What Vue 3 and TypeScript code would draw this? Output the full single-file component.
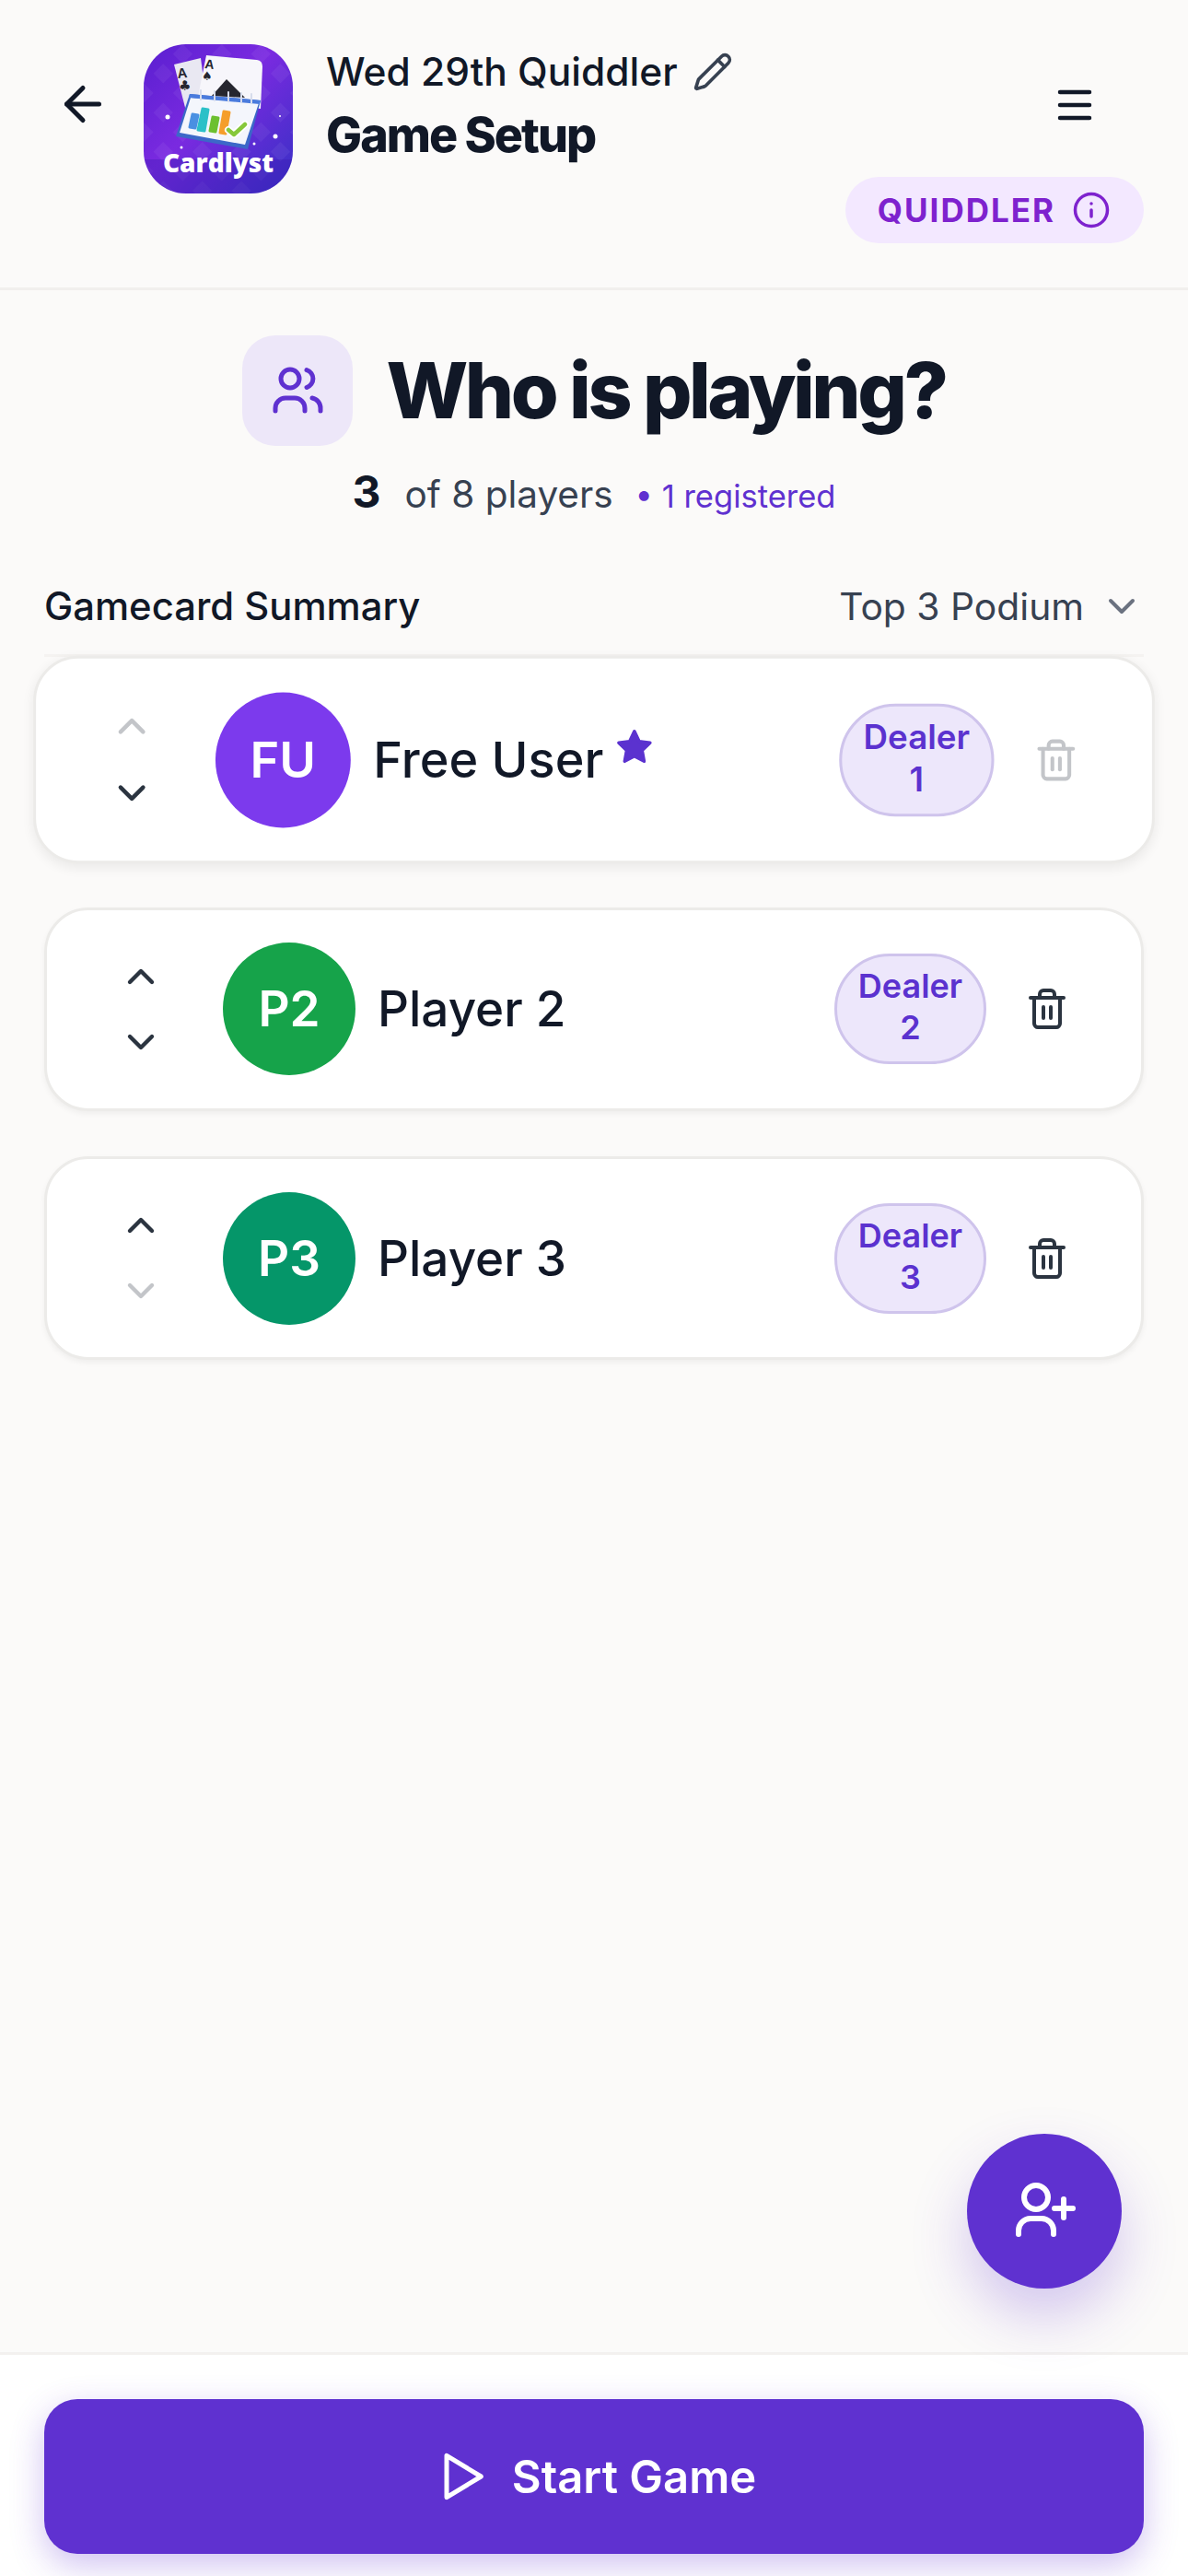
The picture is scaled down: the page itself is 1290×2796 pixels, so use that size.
<script setup lang="ts">
interface Player {
  id: number
  name: string
  initials: string
  color: string
  dealer: number
  registered: boolean
}

const players: Player[] = [
  { id: 1, name: 'Free User', initials: 'FU', color: '#7c3aed', dealer: 1, registered: true },
  { id: 2, name: 'Player 2', initials: 'P2', color: '#16a34a', dealer: 2, registered: false },
  { id: 3, name: 'Player 3', initials: 'P3', color: '#059669', dealer: 3, registered: false },
]
</script>

<template>
  <div class="page">
    <header class="header">
      <button class="icon-btn back">
        <svg viewBox="0 0 24 24" width="60" height="60" fill="none" stroke="#111827" stroke-width="2" stroke-linecap="round" stroke-linejoin="round">
          <path d="m12 19-7-7 7-7" />
          <path d="M19 12H5" />
        </svg>
      </button>

      <svg class="logo" viewBox="0 0 162 162" width="162" height="162">
        <defs>
          <linearGradient id="logoBg" x1="0" y1="0" x2="1" y2="1">
            <stop offset="0" stop-color="#5a1fd0" />
            <stop offset="0.45" stop-color="#7a2ae0" />
            <stop offset="1" stop-color="#3530c4" />
          </linearGradient>
          <pattern id="logoDiamonds" width="30" height="30" patternUnits="userSpaceOnUse" patternTransform="rotate(45)">
            <rect width="15" height="15" fill="#ffffff" opacity="0.05" />
          </pattern>
          <clipPath id="logoClip">
            <rect width="162" height="162" rx="46" />
          </clipPath>
        </defs>
        <g clip-path="url(#logoClip)">
          <rect width="162" height="162" fill="url(#logoBg)" />
          <rect width="162" height="162" fill="url(#logoDiamonds)" />
          <path d="M0 125h162v37H0z" fill="#3a1bb0" opacity="0.35" />
        </g>
        <circle cx="26" cy="79" r="2.5" fill="#fff" />
        <circle cx="143" cy="100" r="2.5" fill="#fff" />
        <circle cx="41" cy="112" r="1.5" fill="#fff" />
        <circle cx="120" cy="108" r="1.5" fill="#fff" />
        <circle cx="148" cy="78" r="1" fill="#fff" />
        <path d="M33 22 62 15 70 78 50 88Z" fill="#e9e8f2" />
        <path d="M68 12 123 17Q129 18 129 24L127 70 58 62Z" fill="#f7f6fb" />
        <text x="37" y="37" class="logo-card-text" font-size="15" transform="rotate(-6 37 37)">A</text>
        <text x="38" y="50" class="logo-suit" font-size="15">♣</text>
        <text x="66" y="26" class="logo-card-text" font-size="14" transform="rotate(6 66 26)">A</text>
        <text x="63" y="39" class="logo-suit" font-size="13">♠</text>
        <path d="M90 38 110 58 74 56Z" fill="#26262f" />
        <path d="M50 54 127 61 113 114 35 100Z" fill="#3c68c8" />
        <path d="M51 58 125 64 110 109 39 96Z" fill="#f4f6fc" />
        <path d="M50 54 127 61 126 65 49 58Z" fill="#4a7bdd" />
        <g fill="none" stroke="#d7dcec" stroke-width="2" stroke-linecap="round">
          <path d="M62 50v10M77 51v10M92 52v10M106 53v10M117 54v10" />
        </g>
        <path d="M53 76l6 1-3 14-6-1Z" fill="#4a90e2" stroke="#4a90e2" stroke-width="3" stroke-linejoin="round" />
        <path d="M64 70l6 1-4 23-7-1Z" fill="#2cc0c8" stroke="#2cc0c8" stroke-width="3" stroke-linejoin="round" />
        <path d="M75 79l6 1-3 15-6-1Z" fill="#6cc030" stroke="#6cc030" stroke-width="3" stroke-linejoin="round" />
        <path d="M87 73l6 1-4 23-6-1Z" fill="#f59e2b" stroke="#f59e2b" stroke-width="3" stroke-linejoin="round" />
        <path d="M92 93 98 98 110 87" fill="none" stroke="#fff" stroke-width="8" stroke-linecap="round" stroke-linejoin="round" />
        <path d="M92 93 98 98 110 87" fill="none" stroke="#86c83a" stroke-width="4.5" stroke-linecap="round" stroke-linejoin="round" />
        <text x="81" y="139" text-anchor="middle" class="logo-name">Cardlyst</text>
      </svg>

      <div class="titles">
        <div class="game-name">
          <span>Wed 29th Quiddler</span>
          <svg viewBox="0 0 24 24" width="44" height="44" fill="none" stroke="#374151" stroke-width="2" stroke-linecap="round" stroke-linejoin="round">
            <path d="M21.174 6.812a1 1 0 0 0-3.986-3.987L3.842 16.174a2 2 0 0 0-.5.83l-1.321 4.352a.5.5 0 0 0 .623.622l4.353-1.32a2 2 0 0 0 .83-.497z" />
            <path d="m15 5 4 4" />
          </svg>
        </div>
        <h1 class="page-title">Game Setup</h1>
      </div>

      <div class="header-right">
        <button class="icon-btn menu">
          <svg viewBox="0 0 72 72" width="72" height="72" fill="none" stroke="#111827" stroke-width="4.500" stroke-linecap="round">
            <path d="M20 22h32M20 36h32M20 50h32" />
          </svg>
        </button>
        <div class="game-badge">
          <span>QUIDDLER</span>
          <svg viewBox="0 0 24 24" width="42" height="42" fill="none" stroke="#7e22ce" stroke-width="2" stroke-linecap="round" stroke-linejoin="round">
            <circle cx="12" cy="12" r="10" />
            <path d="M12 16v-4" />
            <path d="M12 8h.01" />
          </svg>
        </div>
      </div>
    </header>

    <main class="content">
      <div class="hero">
        <div class="hero-icon">
          <svg viewBox="0 0 72 72" width="72" height="72" fill="none" stroke="#5f31d0" stroke-width="5" stroke-linecap="round" stroke-linejoin="round">
            <circle cx="28" cy="23" r="10" />
            <path d="M12 58v-3a11 11 0 0 1 11-11h10a11 11 0 0 1 11 11v3" />
            <path d="M46 13.500a10 10 0 0 1 0 19" />
            <path d="M52 44a11 11 0 0 1 9 11v3" />
          </svg>
        </div>
        <h2 class="hero-title">Who is playing?</h2>
      </div>

      <div class="counts">
        <strong class="count-num">3</strong>
        <span class="count-label">of 8 players</span>
        <span class="count-reg">• 1 registered</span>
      </div>

      <div class="summary">
        <span class="summary-label">Gamecard Summary</span>
        <div class="summary-select">
          <span>Top 3 Podium</span>
          <svg viewBox="0 0 24 24" width="48" height="48" fill="none" stroke="#6b7280" stroke-width="2" stroke-linecap="round" stroke-linejoin="round">
            <path d="m6 9 6 6 6-6" />
          </svg>
        </div>
      </div>

      <div class="player-list">
        <div
          v-for="(p, i) in players"
          :key="p.id"
          class="player-card"
          :class="{ lifted: i === 0 }"
        >
          <div class="arrows">
            <svg :class="{ off: i === 0 }" viewBox="0 0 24 24" width="48" height="48" fill="none" stroke="#2b3440" stroke-width="2.200" stroke-linecap="round" stroke-linejoin="round">
              <path d="m6 15 6-6 6 6" />
            </svg>
            <svg :class="{ off: i === players.length - 1 }" viewBox="0 0 24 24" width="48" height="48" fill="none" stroke="#2b3440" stroke-width="2.200" stroke-linecap="round" stroke-linejoin="round">
              <path d="m6 9 6 6 6-6" />
            </svg>
          </div>
          <div class="avatar" :style="{ background: p.color }">{{ p.initials }}</div>
          <div class="player-name">
            <span>{{ p.name }}</span>
            <svg v-if="p.registered" class="star" viewBox="0 0 24 24" width="42" height="42" fill="#5b32cf" stroke="#5b32cf" stroke-width="2" stroke-linejoin="round">
              <path d="M12 2.500l2.900 6.100 6.600.9-4.800 4.600 1.200 6.600L12 17.600l-5.900 3.100 1.200-6.600L2.500 9.500l6.600-.9z" />
            </svg>
          </div>
          <div class="dealer">Dealer<br />{{ p.dealer }}</div>
          <button class="icon-btn trash" :class="{ off: i === 0 }">
            <svg viewBox="0 0 24 24" width="48" height="48" fill="none" stroke="#2b3440" stroke-width="2" stroke-linecap="round" stroke-linejoin="round">
              <path d="M3 6h18" />
              <path d="M19 6v14c0 1-1 2-2 2H7c-1 0-2-1-2-2V6" />
              <path d="M8 6V4c0-1 1-2 2-2h4c1 0 2 1 2 2v2" />
              <path d="M10 11v6" />
              <path d="M14 11v6" />
            </svg>
          </button>
        </div>
      </div>
    </main>

    <button class="fab">
      <svg viewBox="0 0 84 84" width="84" height="84" fill="none" stroke="#fff" stroke-width="6" stroke-linecap="round" stroke-linejoin="round">
        <circle cx="33" cy="27" r="13" />
        <path d="M14 67v-4a13 13 0 0 1 13-13h12a13 13 0 0 1 13 13v4" />
        <path d="M63 29v20M53 39h20" />
      </svg>
    </button>

    <footer class="footer">
      <button class="start-btn">
        <svg viewBox="0 0 24 24" width="64" height="64" fill="none" stroke="#fff" stroke-width="1.870" stroke-linecap="round" stroke-linejoin="round">
          <path d="M6 3.500v17l14-8.500z" />
        </svg>
        <span>Start Game</span>
      </button>
    </footer>
  </div>
</template>

<style>
body {
  background-color: #fbfaf9;
}
</style>

<style scoped>
* {
  box-sizing: border-box;
  margin: 0;
  padding: 0;
}

.page {
  position: relative;
  display: flex;
  flex-direction: column;
  min-height: 100vh;
  background-color: #fbfaf9;
  color: #111827;
  font-family: Inter, 'Noto Sans', sans-serif;
}

.icon-btn {
  display: flex;
  align-items: center;
  justify-content: center;
  background: none;
  border: none;
}

/* 页面头部 */
.header {
  display: flex;
  align-items: flex-start;
  height: 315px;
  padding: 48px 48px 0 60px;
  border-bottom: 3px solid #f1efed;
}

.back {
  margin-top: 35px;
  margin-right: 36px;
}

.logo {
  flex-shrink: 0;
  margin-right: 36px;
}

.logo-card-text {
  font-family: 'Liberation Sans', sans-serif;
  font-weight: 700;
  fill: #26262f;
}

.logo-suit {
  font-family: 'DejaVu Sans', sans-serif;
  fill: #26262f;
}

.logo-name {
  font-family: 'Open Sans', sans-serif;
  font-size: 28px;
  font-weight: 800;
  fill: #fff;
}

.titles {
  flex: 1;
}

.game-name {
  display: flex;
  align-items: center;
  gap: 16px;
  height: 60px;
  font-size: 42.5px;
  font-weight: 500;
  line-height: 60px;
}

.page-title {
  margin-top: 6px;
  font-size: 52px;
  font-weight: 800;
  line-height: 66px;
  letter-spacing: -2px;
}

.header-right {
  display: flex;
  flex-direction: column;
  align-items: flex-end;
  padding-top: 30px;
}

.menu {
  margin-right: 39px;
}

.game-badge {
  display: flex;
  align-items: center;
  gap: 18px;
  height: 72px;
  margin-top: 42px;
  padding: 0 36px 0 35px;
  border-radius: 36px;
  background-color: #f3e8ff;
  color: #7e22ce;
  font-size: 35px;
  font-weight: 700;
  letter-spacing: 2px;
}

/* 主内容区 */
.content {
  flex: 1;
  padding-top: 48px;
}

.hero {
  display: flex;
  align-items: center;
  justify-content: center;
  gap: 36px;
}

.hero-icon {
  display: flex;
  align-items: center;
  justify-content: center;
  width: 120px;
  height: 120px;
  border-radius: 36px;
  background-color: #ede7f9;
}

.hero-title {
  font-size: 84px;
  font-weight: 800;
  line-height: 122px;
  letter-spacing: -3.500px;
}

.counts {
  display: flex;
  align-items: baseline;
  justify-content: center;
  height: 60px;
  margin-top: 19px;
}

.count-num {
  margin-right: 26px;
  font-size: 48px;
  font-weight: 700;
}

.count-label {
  margin-right: 24px;
  color: #374151;
  font-size: 40.500px;
}

.count-reg {
  color: #5f31d0;
  font-size: 34.500px;
}

.summary {
  display: flex;
  align-items: center;
  justify-content: space-between;
  height: 84px;
  margin: 65px 48px 0;
  padding-bottom: 24px;
  border-bottom: 3px solid #f5f3f1;
}

.summary-label {
  font-size: 41.800px;
  font-weight: 500;
}

.summary-select {
  display: flex;
  align-items: center;
  gap: 17px;
  color: #374151;
  font-size: 40.800px;
}

/* 玩家列表 */
.player-list {
  display: flex;
  flex-direction: column;
  gap: 49.5px;
  margin: 1px 48px 0;
}

.player-card {
  display: flex;
  align-items: center;
  height: 221px;
  padding: 0 78px 0 0;
  border: 3px solid #ecebe9;
  border-radius: 48px;
  background-color: #fff;
  box-shadow: 0 3px 6px rgba(0, 0, 0, 0.05);
}

.player-card.lifted {
  transform: scale(1.02);
  box-shadow: 0 4px 12px rgba(0, 0, 0, 0.07);
}

.arrows {
  display: flex;
  flex-direction: column;
  align-items: center;
  gap: 23px;
  width: 120px;
  margin-left: 42px;
  margin-right: 29px;
}

.arrows svg.off {
  opacity: 0.28;
}

.avatar {
  display: flex;
  align-items: center;
  justify-content: center;
  flex-shrink: 0;
  width: 144px;
  height: 144px;
  border-radius: 50%;
  color: #fff;
  font-size: 53px;
  font-weight: 600;
}

.player-name {
  display: flex;
  flex: 1;
  align-items: center;
  gap: 12px;
  margin-left: 24px;
  font-size: 53px;
  font-weight: 500;
}

.star {
  margin-bottom: 28px;
}

.dealer {
  width: 165px;
  height: 120px;
  padding-top: 10px;
  border: 3px solid #cfc4ec;
  border-radius: 60px;
  background-color: #ede7fb;
  color: #5b32cf;
  font-size: 36px;
  font-weight: 600;
  line-height: 45px;
  text-align: center;
}

.trash {
  margin-left: 42px;
}

.trash.off {
  opacity: 0.28;
}

/* 悬浮按钮 */
.fab {
  position: absolute;
  right: 72px;
  bottom: 312px;
  z-index: 2;
  display: flex;
  align-items: center;
  justify-content: center;
  width: 168px;
  height: 168px;
  border: none;
  border-radius: 50%;
  background-color: #5f31d0;
  box-shadow: 0 30px 60px rgba(95, 49, 208, 0.25);
}

/* 页脚 */
.footer {
  padding: 48px 48px 24px;
  border-top: 3px solid #f3f1ef;
  background-color: #fff;
}

.start-btn {
  display: flex;
  align-items: center;
  justify-content: center;
  gap: 23px;
  width: 100%;
  height: 168px;
  border: none;
  border-radius: 36px;
  background-color: #5f31d0;
  box-shadow: 0 12px 36px rgba(95, 49, 208, 0.3);
  color: #fff;
  font-family: inherit;
  font-size: 49px;
  font-weight: 600;
}
</style>
